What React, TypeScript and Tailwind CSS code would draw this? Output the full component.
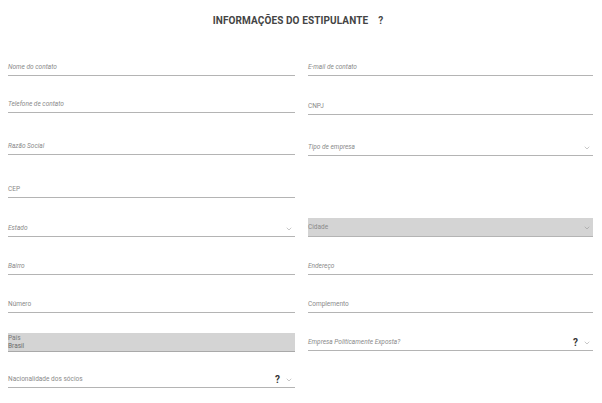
import React from 'react';
import { ChevronDown } from 'lucide-react';

type FieldProps = {
    label: string;
    italic?: boolean;
    select?: boolean;
    help?: boolean;
    disabled?: boolean;
    value?: string;
    className?: string;
};

const Field: React.FC<FieldProps> = ({ label, italic, select, help, disabled, value, className = '' }) => {
    if (value) {
        return (
            <div className={`flex flex-col justify-center h-[19px] bg-[#d4d4d4] border-b border-[#a9a9a9] ${className}`}>
                <span className="text-[6.5px] leading-[8px] text-[#7a7a7a]">{label}</span>
                <span className="text-[6.5px] leading-[8px] text-[#6a6a6a]">{value}</span>
            </div>
        );
    }
    return (
        <div
            className={`flex items-center justify-between h-[17px] pt-[2px] pr-[2px] border-b border-[#b4b4b4] ${disabled ? 'bg-[#d4d4d4] border-[#a9a9a9]' : ''} ${className}`}
        >
            <span className={`text-[6.5px] text-[#8a8a8a] ${italic ? 'italic' : ''}`}>{label}</span>
            {(select || help) && (
                <div className="flex items-center gap-[5px]">
                    {help && <span className="text-[10px] font-bold text-[#333] leading-none">?</span>}
                    {select && <ChevronDown size={8} strokeWidth={1.4} className="text-[#888]" />}
                </div>
            )}
        </div>
    );
};

const App: React.FC = () => {
    return (
        <div className="w-[602px] h-[403px] bg-white font-['Roboto',sans-serif] overflow-hidden">
            <header className="flex justify-center items-center h-[40px] pr-[6px]">
                <h2 className="text-[10px] font-bold text-[#444] tracking-[0.1px]">INFORMAÇÕES DO ESTIPULANTE</h2>
                <span className="ml-[10px] text-[10px] font-bold text-[#444]">?</span>
            </header>

            <div className="grid grid-cols-[287px_285px] gap-x-[13px] pl-2 pt-[16px] grid-rows-[20px_39px_41px_42px_39px_38px_38px_39px_36px] items-end">
                <Field label="Nome do contato" italic />
                <Field label="E-mail de contato" italic />

                <Field label="Telefone de contato" italic className="mb-[2px]" />
                <Field label="CNPJ" />

                <Field label="Razão Social" italic className="mb-[1px]" />
                <Field label="Tipo de empresa" italic select />

                <Field label="CEP" />
                <div />

                <Field label="Estado" italic select />
                <Field label="Cidade" select disabled className="h-[19px]" />

                <Field label="Bairro" italic />
                <Field label="Endereço" italic />

                <Field label="Número" />
                <Field label="Complemento" />

                <Field label="País" value="Brasil" />
                <Field label="Empresa Politicamente Exposta?" italic select help className="mb-[1px]" />

                <Field label="Nacionalidade dos sócios" select help />
                <div />
            </div>
        </div>
    );
};

export default App;
